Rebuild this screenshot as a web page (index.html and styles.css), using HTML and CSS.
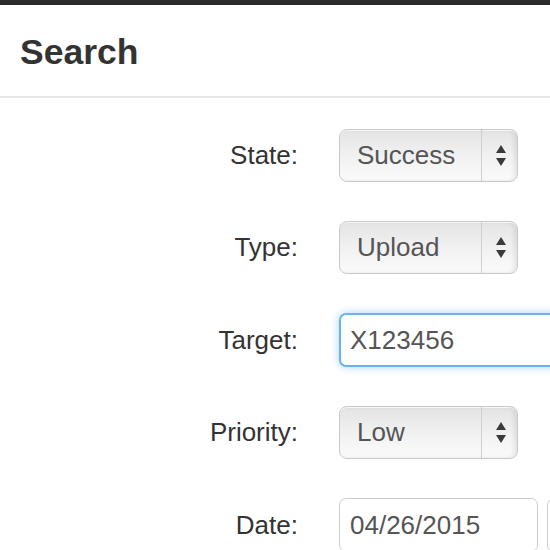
FILE: index.html
```html
<!DOCTYPE html>
<html>
<head>
<meta charset="utf-8">
<link rel="stylesheet" href="styles.css">
</head>
<body>
<div class="topbar"></div>
<header class="head"><h1 class="title">Search</h1></header>
<form class="form">
  <label class="lbl">State:</label>
  <div class="select"><span class="val">Success</span><span class="arrow"><i class="up"></i><i class="down"></i></span></div>
  <label class="lbl">Type:</label>
  <div class="select"><span class="val">Upload</span><span class="arrow"><i class="up"></i><i class="down"></i></span></div>
  <label class="lbl">Target:</label>
  <div class="input focus">X123456</div>
  <label class="lbl">Priority:</label>
  <div class="select"><span class="val">Low</span><span class="arrow"><i class="up"></i><i class="down"></i></span></div>
  <label class="lbl">Date:</label>
  <div class="daterow"><div class="input date">04/26/2015</div><div class="input extra"></div></div>
</form>
</body>
</html>
```
FILE: styles.css
```css
html, body { margin: 0; padding: 0; background: #fff; overflow: hidden; }
body { font-family: "Liberation Sans", Arial, sans-serif; color: #333; width: 550px; height: 550px; }
.topbar { height: 5px; background: #2b2b2b; }
.head { height: 91px; border-bottom: 2px solid #e8e8e8; display: flex; align-items: center; padding-left: 20px; }
.title { margin: 0; font-size: 35.5px; font-weight: bold; color: #333; position: relative; top: 2px; }
.form { display: grid; grid-template-columns: 298px auto; column-gap: 41px; row-gap: 39px; padding-top: 31px; align-items: center; }
.lbl { text-align: right; font-size: 26px; color: #333; }
.select { width: 179px; height: 53px; box-sizing: border-box; border: 1px solid #c9c9c9; border-radius: 8px; background: linear-gradient(#e4e4e4, #f2f2f2 55%, #fbfbfb); box-shadow: inset -3px 0 4px rgba(0,0,0,0.08), inset 0 1px 0 #fff; display: flex; align-items: stretch; font-size: 26px; color: #555; }
.val { flex: 1; display: flex; align-items: center; padding-left: 17px; border-right: 1px solid #cfcfcf; }
.arrow { width: 35px; display: flex; flex-direction: column; align-items: center; justify-content: center; gap: 5px; padding-left: 2px; box-sizing: border-box; }
.up { width: 0; height: 0; border-left: 5px solid transparent; border-right: 5px solid transparent; border-bottom: 8px solid #3a3a3a; }
.down { width: 0; height: 0; border-left: 5px solid transparent; border-right: 5px solid transparent; border-top: 8px solid #3a3a3a; }
.input { height: 54px; box-sizing: border-box; border: 1px solid #cccccc; border-radius: 7px; font-size: 26px; color: #555; display: flex; align-items: center; padding-left: 10px; background: #fff; }
.focus { width: 260px; border: 2px solid #6cb2ee; padding-left: 9px; box-shadow: 0 0 8px rgba(102,175,233,0.55); }
.daterow { display: flex; gap: 9px; }
.date { width: 199px; }
.extra { width: 60px; }
```
